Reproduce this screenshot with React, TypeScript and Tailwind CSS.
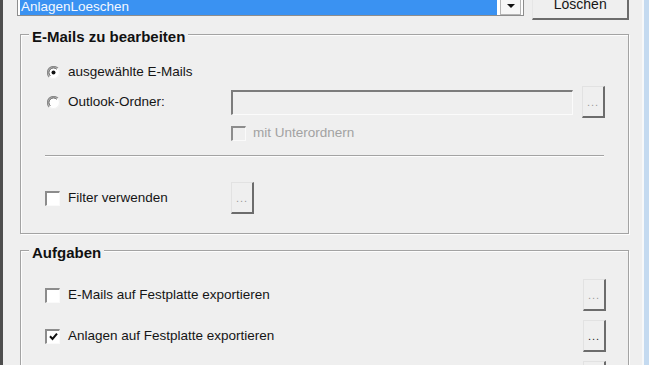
import React from "react";

const font = "font-['Liberation_Sans',Arial,sans-serif]";

function Radio({ checked }: { checked?: boolean }) {
  return (
    <svg width="13" height="13" viewBox="0 0 13 13" className="shrink-0">
      <circle cx="6.5" cy="6.5" r="5.5" fill="#fff" />
      <path d="M11 2.2 A5.8 5.8 0 0 0 2.2 11" fill="none" stroke="#8a8a8a" strokeWidth="1.2" />
      <path d="M9.8 3.2 A4.6 4.6 0 0 0 3.2 9.8" fill="none" stroke="#3c3c3c" strokeWidth="1" />
      <path d="M2.2 11 A5.8 5.8 0 0 0 11 2.2" fill="none" stroke="#f4f4f4" strokeWidth="1" />
      {checked && <circle cx="6.5" cy="6.5" r="2" fill="#111" />}
    </svg>
  );
}

function Check({ checked, disabled }: { checked?: boolean; disabled?: boolean }) {
  return (
    <span
      className={`flex h-[15px] w-[15px] shrink-0 items-center justify-center border-l-2 border-t-2 border-b border-r border-l-[#8c8c8c] border-t-[#8c8c8c] border-b-[#fafafa] border-r-[#fafafa] ${
        disabled ? "bg-[#efefef]" : "bg-white"
      }`}
    >
      {checked && (
        <svg width="9" height="9" viewBox="0 0 9 9">
          <path d="M1 4.3 L3.5 7 L8 1.6" fill="none" stroke="#111" strokeWidth="2" />
        </svg>
      )}
    </span>
  );
}

function DotsButton({ active }: { active?: boolean }) {
  return (
    <button
      className={`flex h-[32px] w-[23px] shrink-0 items-end justify-center border-l border-t border-b-2 border-r-2 border-l-[#e2e2e2] border-t-[#e2e2e2] border-b-[#6c6c6c] border-r-[#6c6c6c] bg-[#efefef] pb-[8px] text-[11px] leading-none tracking-[1px] ${
        active ? "text-[#222]" : "text-[#9a9a9a]"
      }`}
    >
      ...
    </button>
  );
}

// Gruppenrahmen im Stil von Windows (Titel liegt auf der oberen Linie)
function Group({ title, children, className }: { title: string; children: React.ReactNode; className?: string }) {
  return (
    <div
      className={`flex flex-col border border-[#a3a3a3] shadow-[inset_1px_1px_0_#fdfdfd,1px_1px_0_#fdfdfd] ${className ?? ""}`}
    >
      <div className="-mt-[7px] ml-[8px] self-start bg-[#efefef] px-[3px] text-[15px] font-bold leading-[18px] text-[#111]">
        {title}
      </div>
      <div className="pl-[24px] pr-[22px]">{children}</div>
    </div>
  );
}

export default function App() {
  return (
    <div className={`flex h-[365px] w-[649px] overflow-hidden bg-[#efefef] text-[13.5px] text-[#151515] ${font}`}>
      <div className="w-[3px] shrink-0 bg-[#4e4e4e]" />

      <div className="flex w-[639px] shrink-0 flex-col pl-[17px] pr-[13px]">
        {/* Vorlage auswählen */}
        <div className="-ml-[3px] -mt-[10px] flex items-start">
          <div className="flex h-[26px] w-[510px] items-stretch border border-[#8d8d8d] bg-white p-[2px] pb-0">
            <div className="flex flex-1 items-end bg-[#3a92f2] pl-[1px] leading-[16px] text-[#f4f8ff]">
              AnlagenLoeschen
            </div>
            <div className="ml-[3px] flex w-[21px] items-end justify-center border border-[#b5b5b5] bg-[#f7f7f7] pb-[6px]">
              <svg width="8" height="4" viewBox="0 0 8 4">
                <path d="M0 0 H8 L4 4 Z" fill="#111" />
              </svg>
            </div>
          </div>
          <button className="ml-[8px] flex h-[30px] w-[97px] items-center justify-center border-l border-t border-b-2 border-r-2 border-l-[#e6e6e6] border-t-[#e6e6e6] border-b-[#6c6c6c] border-r-[#6c6c6c] bg-[#efefef] text-[14px] text-[#151515]">
            Löschen
          </button>
        </div>

        <Group title="E-Mails zu bearbeiten" className="mt-[14px] pb-[19px]">
          <div className="mt-[16px] flex h-[20px] items-center">
            <span className="ml-[2px]">
              <Radio checked />
            </span>
            <span className="ml-[8px]">ausgewählte E-Mails</span>
          </div>

          <div className="mt-[4px] flex h-[32px] items-center">
            <div className="flex w-[186px] items-center">
              <span className="ml-[2px]">
                <Radio />
              </span>
              <span className="ml-[8px]">Outlook-Ordner:</span>
            </div>
            <div className="h-[25px] w-[342px] border-l-2 border-t-2 border-b border-r border-l-[#7c7c7c] border-t-[#7c7c7c] border-b-[#fbfbfb] border-r-[#fbfbfb] bg-[#efefef]" />
            <span className="ml-[9px]">
              <DotsButton />
            </span>
          </div>

          <div className="ml-[186px] mt-[5px] flex h-[20px] items-center text-[#a2a2a2]">
            <Check disabled />
            <span className="ml-[7px]">mit Unterordnern</span>
          </div>

          <div className="mt-[12px] h-[2px] w-[559px] border-t border-b border-t-[#a3a3a3] border-b-[#fdfdfd]" />

          <div className="mt-[25px] flex h-[32px] items-center">
            <div className="flex w-[186px] items-center">
              <Check />
              <span className="ml-[8px]">Filter verwenden</span>
            </div>
            <DotsButton />
          </div>
        </Group>

        <Group title="Aufgaben" className="mt-[16px]">
          <div className="mt-[17px] flex h-[32px] items-center justify-between">
            <div className="flex items-center">
              <Check />
              <span className="ml-[8px]">E-Mails auf Festplatte exportieren</span>
            </div>
            <DotsButton />
          </div>
          <div className="mt-[9px] flex h-[32px] items-center justify-between">
            <div className="flex items-center">
              <Check checked />
              <span className="ml-[8px]">Anlagen auf Festplatte exportieren</span>
            </div>
            <DotsButton active />
          </div>
          <div className="mt-[9px] flex h-[32px] items-center justify-between">
            <div className="flex items-center">
              <Check />
              <span className="ml-[8px]">Anlagen aus E-Mails löschen</span>
            </div>
            <DotsButton active />
          </div>
        </Group>
      </div>

      <div className="flex-1 border-l-2 border-l-[#f6f8fa] bg-[#c4daf0]" />
    </div>
  );
}
